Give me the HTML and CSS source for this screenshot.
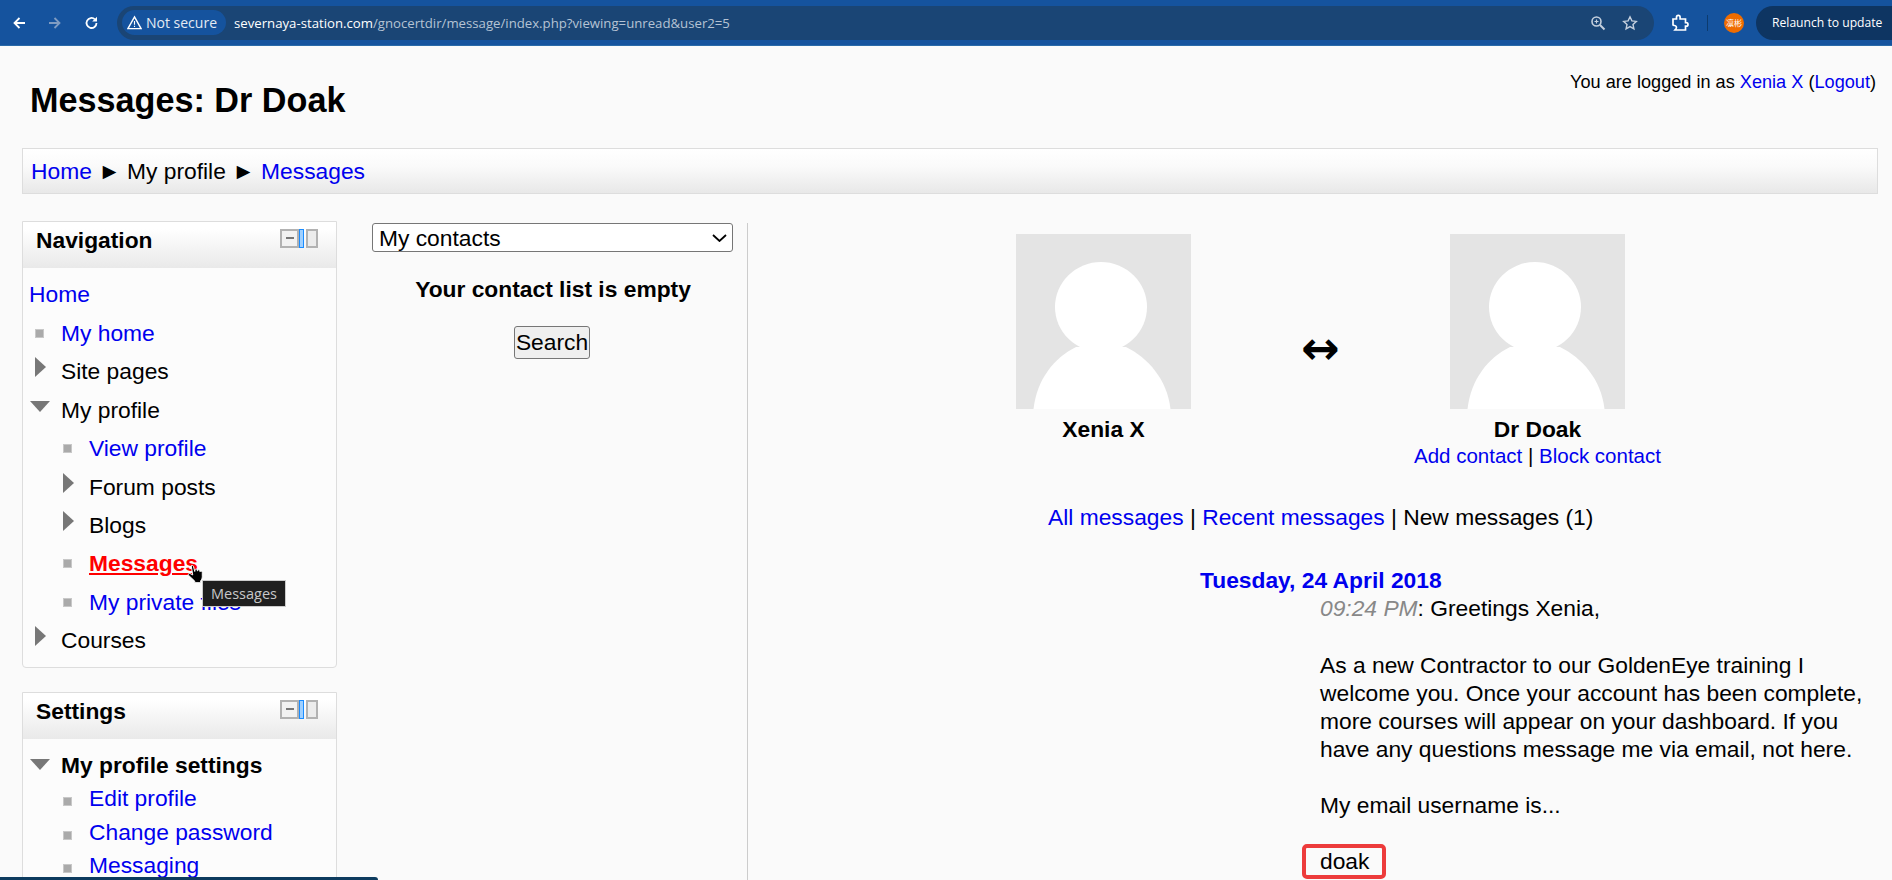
FILE: index.html
```html
<!DOCTYPE html>
<html lang="en">

<head>
    <meta charset="UTF-8">
    <title>Messages: Dr Doak</title>
    <link rel="stylesheet" href="styles.css">
</head>

<body>
    <div class="browser-bar">
        <svg class="tool-icon" viewBox="0 0 16 16"><path d="M14 8H3.500M8.500 3L3.500 8l5 5" fill="none" stroke="#fff" stroke-width="1.800"/></svg>
        <svg class="tool-icon" viewBox="0 0 16 16"><path d="M2 8h10.500M7.500 3l5 5-5 5" fill="none" stroke="#7f9cc2" stroke-width="1.800"/></svg>
        <svg class="tool-icon" viewBox="0 0 16 16"><path d="M13.500 8a5 5 0 1 1-1.600-3.700" fill="none" stroke="#fff" stroke-width="1.800"/><path d="M14 1.800v4.800H9.200z" fill="#fff"/></svg>
        <div class="address-bar">
            <span class="not-secure">
                <svg viewBox="0 0 16 16"><path d="M8 2L15 14.500H1z" fill="none" stroke="#fff" stroke-width="1.500"/><path d="M8 6.500v4M8 11.500v1.300" stroke="#fff" stroke-width="1.200"/></svg>
                Not secure
            </span>
            <span class="url"><span class="host">severnaya-station.com</span>/gnocertdir/message/index.php?viewing=unread&amp;user2=5</span>
            <svg class="addr-icon" viewBox="0 0 16 16"><circle cx="6.500" cy="6.500" r="4.500" fill="none" stroke="#c5d0de" stroke-width="1.600"/><path d="M10 10l4.500 4.500" stroke="#c5d0de" stroke-width="2"/><path d="M4.500 6.500h4M6.500 4.500v4" stroke="#c5d0de" stroke-width="1.200"/></svg>
            <svg class="addr-icon" viewBox="0 0 16 16"><path d="M8 1.800l1.900 4.100 4.400.5-3.300 3 .9 4.400L8 11.600l-3.900 2.200.9-4.400-3.300-3 4.400-.5z" fill="none" stroke="#c5d0de" stroke-width="1.400"/></svg>
        </div>
        <svg class="ext-icon" viewBox="0 0 18 18"><path d="M2 5h3.500V3.200a1.800 1.800 0 0 1 3.600 0V5h5.400v3.600h.7a1.800 1.800 0 0 1 0 3.600h-.7V16H4l1-1.200c1-1.400.2-3.300-1.500-3.300H3L2 11z" fill="none" stroke="#fff" stroke-width="1.700"/></svg>
        <span class="bar-sep"></span>
        <span class="avatar-badge">凛彬</span>
        <span class="relaunch">Relaunch to update</span>
    </div>

    <div class="page">
        <header class="page-head">
            <h1>Messages: Dr Doak</h1>
            <div class="login-info">You are logged in as <a href="#">Xenia X</a> (<a href="#">Logout</a>)</div>
        </header>

        <nav class="breadcrumb">
            <a href="#">Home</a> ► My profile ► <a href="#">Messages</a>
        </nav>

        <div class="columns">
            <aside class="side">
                <section class="block nav-block">
                    <div class="block-head">
                        <h2>Navigation</h2>
                        <div class="dock"><i class="dock-min"></i><i class="dock-mid"></i><i class="dock-right"></i></div>
                    </div>
                    <div class="block-body">
                        <div class="tree-home"><a href="#">Home</a></div>
                        <ul class="tree">
                            <li><span class="bullet"></span><a href="#">My home</a></li>
                            <li><span class="arrow-right"></span>Site pages</li>
                            <li><span class="arrow-down"></span>My profile</li>
                            <li class="sub"><span class="bullet"></span><a href="#">View profile</a></li>
                            <li class="sub"><span class="arrow-right"></span>Forum posts</li>
                            <li class="sub"><span class="arrow-right"></span>Blogs</li>
                            <li class="sub"><span class="bullet"></span><a href="#" class="hovered">Messages</a>
                                <svg class="hand" viewBox="1 1 14 17"><path d="M3.500 1.500c1-.6 1.800 0 2 1l1 4 .3-1.500c.5-1 1.600-.7 1.800.2l.2 1 .3-.7c.6-.8 1.600-.4 1.700.4l.1.8.4-.3c.8-.4 1.600 0 1.600 1v3.600c0 1.500-.6 2.700-1.400 3.500v1.500H6.500v-1.300L1.200 9.700c-.6-.8.200-2 1.300-1.500l2.300 1.300z" fill="#000" stroke="#fff" stroke-width=".8"/></svg>
                                <span class="tooltip">Messages</span>
                            </li>
                            <li class="sub"><span class="bullet"></span><a href="#">My private files</a></li>
                            <li><span class="arrow-right"></span>Courses</li>
                        </ul>
                    </div>
                </section>

                <section class="block settings-block">
                    <div class="block-head">
                        <h2>Settings</h2>
                        <div class="dock"><i class="dock-min"></i><i class="dock-mid"></i><i class="dock-right"></i></div>
                    </div>
                    <div class="block-body">
                        <ul class="tree compact">
                            <li class="strong"><span class="arrow-down"></span>My profile settings</li>
                            <li class="sub"><span class="bullet"></span><a href="#">Edit profile</a></li>
                            <li class="sub"><span class="bullet"></span><a href="#">Change password</a></li>
                            <li class="sub"><span class="bullet"></span><a href="#">Messaging</a></li>
                        </ul>
                    </div>
                </section>
            </aside>

            <div class="contacts">
                <div class="select-wrap">
                    <select class="contact-select"><option>My contacts</option></select>
                    <svg class="select-arrow" viewBox="0 0 15 8"><path d="M1 1l6.500 6L14 1" fill="none" stroke="#000" stroke-width="1.800"/></svg>
                </div>
                <p class="empty">Your contact list is empty</p>
                <button class="search-btn">Search</button>
            </div>

            <main class="history">
                <div class="users">
                    <div class="user">
                        <svg class="user-pic" viewBox="0 0 175 175"><rect width="175" height="175" fill="#e4e4e4"/><ellipse cx="85" cy="73" rx="46" ry="45" fill="#fff"/><path d="M17.500 175C21 145 38 124 60 113H110C132 124 151 145 154.500 175z" fill="#fff"/></svg>
                        <div class="user-name">Xenia X</div>
                    </div>
                    <div class="swap">↔</div>
                    <div class="user">
                        <svg class="user-pic" viewBox="0 0 175 175"><rect width="175" height="175" fill="#e4e4e4"/><ellipse cx="85" cy="73" rx="46" ry="45" fill="#fff"/><path d="M17.500 175C21 145 38 124 60 113H110C132 124 151 145 154.500 175z" fill="#fff"/></svg>
                        <div class="user-name">Dr Doak</div>
                        <div class="user-links"><a href="#">Add contact</a> | <a href="#">Block contact</a></div>
                    </div>
                </div>

                <div class="msg-filter"><a href="#">All messages</a> | <a href="#">Recent messages</a> | New messages (1)</div>

                <div class="msg-date">Tuesday, 24 April 2018</div>
                <div class="msg-body">
                    <p class="msg-first"><em>09:24 PM</em>: Greetings Xenia,</p>
                    <p>As a new Contractor to our GoldenEye training I welcome you. Once your account has been complete, more courses will appear on your dashboard. If you have any questions message me via email, not here.</p>
                    <p>My email username is...</p>
                    <p><span class="marked">doak</span></p>
                </div>
            </main>
        </div>
    </div>

    <div class="task-edge"></div>
</body>
</html>
```

FILE: styles.css
```css
html, body {
    height: 880px;
    overflow: hidden;
}

body {
    margin: 0;
    font-family: "Liberation Sans", Arial, sans-serif;
    font-size: 22.8px;
    line-height: 28px;
    color: #000;
    background-color: #fafafa;
}

a {
    color: #0000ee;
    text-decoration: none;
}

/* browser chrome */
.browser-bar {
    display: flex;
    align-items: center;
    height: 45px;
    border-bottom: 1px solid #2a6aa8;
    background-color: #15539e;
    padding-left: 11px;
    font-family: "Open Sans", sans-serif;
}

.tool-icon {
    width: 16px;
    height: 16px;
    margin-right: 20px;
}

.address-bar {
    display: flex;
    align-items: center;
    flex: none;
    width: 1537px;
    height: 34px;
    margin-left: -2px;
    border-radius: 17px;
    background-color: #1a4575;
    line-height: 18px;
}

.not-secure {
    display: flex;
    align-items: center;
    gap: 4px;
    height: 25px;
    margin-left: 5px;
    padding: 0 9px 0 5px;
    border-radius: 13px;
    background-color: #15539e;
    color: #e3eaf3;
    font-size: 14px;
}

.not-secure svg {
    width: 15px;
    height: 15px;
}

.url {
    flex: 1;
    margin-left: 8px;
    color: #b5c3d4;
    font-size: 13.2px;
}

.host {
    color: #fff;
}

.addr-icon {
    width: 16px;
    height: 16px;
    margin-right: 16px;
}

.ext-icon {
    width: 18px;
    height: 18px;
    margin-left: 17px;
}

.bar-sep {
    width: 1px;
    height: 16px;
    margin-left: 18px;
    background-color: #0d3b6e;
}

.avatar-badge {
    width: 20px;
    height: 20px;
    margin-left: 16px;
    border-radius: 50%;
    background-color: #ef6c00;
    color: #fff;
    font-family: "Noto Sans CJK SC", sans-serif;
    font-size: 8px;
    line-height: 20px;
    text-align: center;
}

.relaunch {
    height: 34px;
    margin-left: 12px;
    padding-left: 16px;
    flex: 1;
    border-radius: 17px 0 0 17px;
    background-color: #0e3562;
    color: #fff;
    font-size: 12.15px;
    line-height: 34px;
    white-space: nowrap;
}

/* page */
.page {
    padding: 0 14px 0 22px;
}

.page-head {
    display: flex;
    justify-content: space-between;
    height: 102px;
}

.page-head h1 {
    margin: 34px 0 0 8px;
    font-size: 34.2px;
    line-height: 40px;
}

.login-info {
    margin: 24px 2px 0 0;
    font-size: 18.15px;
    line-height: 24px;
}

.breadcrumb {
    box-sizing: border-box;
    height: 46px;
    padding-left: 8px;
    border: 1px solid #ddd;
    background: linear-gradient(#fff, #fafafa 40%, #e8e8e8);
    line-height: 44px;
}

.columns {
    display: flex;
    margin-top: 27px;
}

.side {
    flex: none;
    width: 315px;
}

.block {
    margin-bottom: 24px;
    border: 1px solid #ddd;
    border-radius: 0 0 4px 4px;
    background-color: #fcfcfc;
}

.block-head {
    display: flex;
    justify-content: space-between;
    height: 43px;
    padding: 3px 18px 0 13px;
    background: linear-gradient(#fff, #fff 15%, #e9e9e9);
}

.block-head h2 {
    margin: 0;
    font-size: 22.8px;
    line-height: 30px;
}

.dock {
    display: flex;
    margin-top: 4px;
    height: 19px;
}

.dock i {
    display: block;
    box-sizing: border-box;
    height: 19px;
    border: 2px solid #b2b2b2;
}

.dock-min {
    position: relative;
    width: 19px;
    background-color: #f2f2f2;
}

.dock-min::after {
    content: "";
    position: absolute;
    left: 4px;
    top: 6px;
    width: 8px;
    height: 2px;
    background-color: #777;
}

.dock .dock-mid {
    width: 5px;
    border: 1px solid #1a8cff;
    background-color: #9fd0ff;
}

.dock .dock-right {
    width: 12px;
    margin-left: 2px;
    background-color: #ececec;
}

.block-body {
    padding: 10px 6px 0 6px;
}

.nav-block .block-body {
    height: 389px;
}

.settings-block .block-body {
    height: 200px;
}

.tree-home {
    height: 36px;
    line-height: 33px;
}

.tree {
    margin: 0;
    padding: 0;
    list-style: none;
}

.tree li {
    position: relative;
    height: 38.4px;
    padding-left: 32px;
    line-height: 38.4px;
    white-space: nowrap;
}

.tree li.sub {
    padding-left: 60px;
}

.compact li {
    height: 33.3px;
    line-height: 33.3px;
}

.tree .strong {
    font-weight: bold;
}

.bullet {
    position: absolute;
    left: 6px;
    top: 15px;
    box-sizing: border-box;
    width: 9px;
    height: 9px;
    border: 1px solid #c8c8c8;
    background-color: #aaa;
}

.sub .bullet {
    left: 34px;
}

.arrow-right {
    position: absolute;
    left: 6px;
    top: 5px;
    border-left: 11px solid #777;
    border-top: 10px solid transparent;
    border-bottom: 10px solid transparent;
}

.sub .arrow-right {
    left: 34px;
}

.arrow-down {
    position: absolute;
    left: 1px;
    top: 10px;
    border-top: 11px solid #777;
    border-left: 10px solid transparent;
    border-right: 10px solid transparent;
}

.hovered {
    color: #f00;
    font-weight: bold;
    text-decoration: underline;
}

.hand {
    position: absolute;
    left: 158px;
    top: 21px;
    width: 19px;
    height: 20px;
}

.tooltip {
    position: absolute;
    left: 173px;
    top: 36px;
    z-index: 2;
    padding: 0 8px;
    border: 1px solid #ccc;
    background-color: #1f1f1f;
    color: #c8c8c8;
    font-family: "Open Sans", sans-serif;
    font-size: 14.5px;
    line-height: 25px;
}

.contacts {
    box-sizing: border-box;
    flex: none;
    width: 411px;
    height: 700px;
    margin-top: 2px;
    padding: 0 13px 0 35px;
    border-right: 1px solid #ccc;
    text-align: center;
}

.select-wrap {
    position: relative;
}

.contact-select {
    display: block;
    width: 361px;
    height: 29px;
    padding: 0 0 0 6px;
    font-family: inherit;
    font-size: 22.8px;
    appearance: none;
    background-color: #fff;
    border: 1px solid #767676;
    border-radius: 3px;
}

.select-arrow {
    position: absolute;
    right: 7px;
    top: 11px;
    width: 15px;
    height: 8px;
}

.empty {
    margin: 23px 0 0;
    font-weight: bold;
}

.search-btn {
    height: 33px;
    margin: 23px 2px 0 0;
    padding: 0 1px;
    font-family: inherit;
    font-size: 22.8px;
    border: 1px solid #767676;
    border-radius: 3px;
    background-color: #efefef;
}

.history {
    flex: 1;
    padding-top: 13px;
}

.users {
    display: flex;
    justify-content: center;
    margin-left: 15px;
}

.user {
    width: 270px;
    text-align: center;
}

.user-pic {
    display: block;
    width: 175px;
    height: 175px;
    margin: 0 auto;
}

.user-name {
    margin-top: 6px;
    font-weight: bold;
}

.user-links {
    font-size: 20.5px;
    line-height: 25px;
}

.swap {
    width: 164px;
    padding-top: 89px;
    font-family: "DejaVu Sans", sans-serif;
    font-size: 46px;
    font-weight: bold;
    line-height: 50px;
    text-align: center;
}

.msg-filter {
    margin: 35px 0 0 300px;
}

.msg-date {
    margin: 35px 0 0 452px;
    color: #0000ee;
    font-weight: bold;
}

.msg-body {
    width: 550px;
    margin-left: 572px;
}

.msg-body p {
    margin: 0 0 28px;
}

.msg-body .msg-first {
    margin-bottom: 29px;
}

.msg-body em {
    color: #888;
}

.marked {
    display: inline-block;
    margin: -4px 0 0 -18.5px;
    padding: 0 13px 0 14.5px;
    border: 4px solid #ed3b3b;
    border-radius: 5px;
    line-height: 27px;
}

.task-edge {
    position: fixed;
    left: 0;
    bottom: 0;
    width: 378px;
    height: 3px;
    border-radius: 0 3px 0 0;
    background-color: #0d3b5e;
}
```
